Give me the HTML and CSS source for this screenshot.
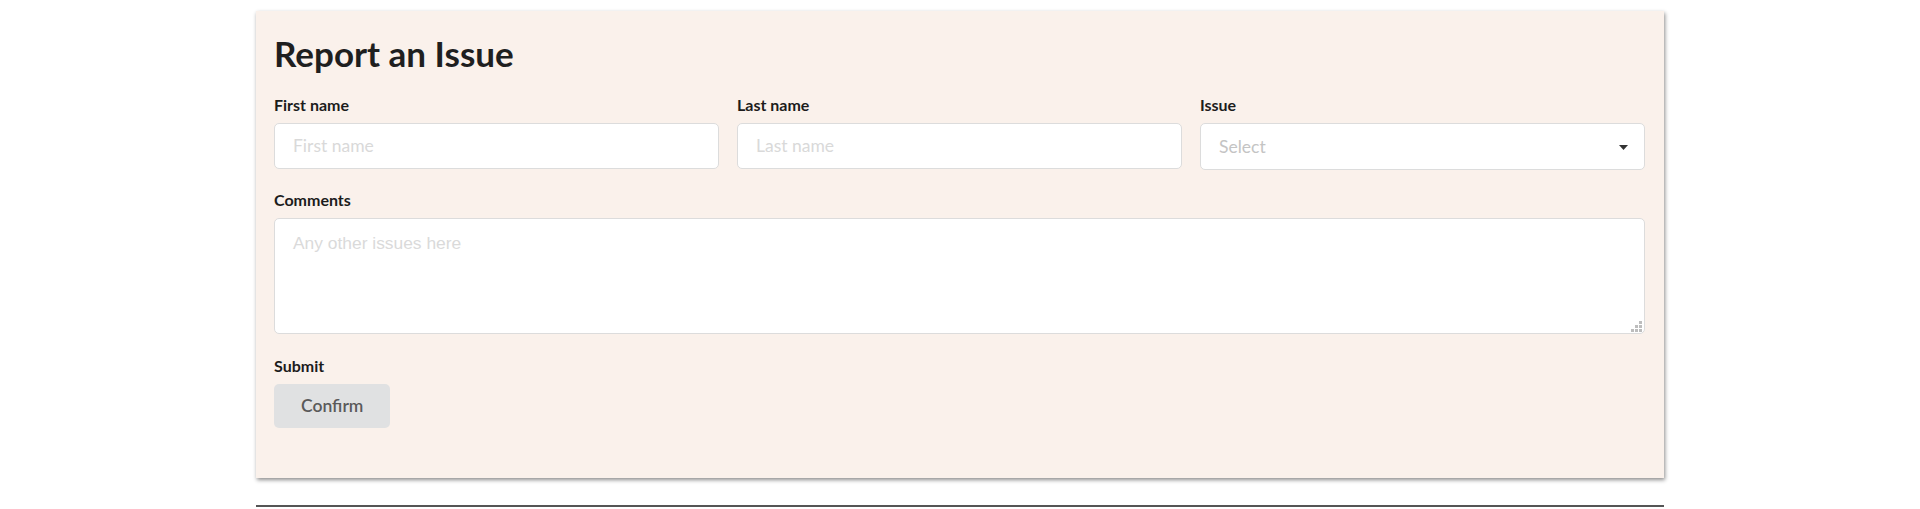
FILE: index.html
```html
<!DOCTYPE html>
<html lang="en">
<head>
<meta charset="utf-8">
<title>Report an Issue</title>
<link rel="stylesheet" href="styles.css">
</head>
<body>
<div class="container">
  <form class="card">
    <h1 class="title">Report an Issue</h1>
    <div class="row three">
      <div class="field">
        <label class="label">First name</label>
        <input class="input" type="text" placeholder="First name">
      </div>
      <div class="field">
        <label class="label">Last name</label>
        <input class="input" type="text" placeholder="Last name">
      </div>
      <div class="field">
        <label class="label">Issue</label>
        <div class="dropdown">
          <span class="dropdown-text">Select</span>
          <svg class="caret" width="9" height="5" viewBox="0 0 9 5"><path d="M0 0H9L4.5 5Z" fill="#333"/></svg>
        </div>
      </div>
    </div>
    <div class="row">
      <div class="field">
        <label class="label">Comments</label>
        <div class="textarea-wrap">
          <textarea class="textarea" placeholder="Any other issues here"></textarea>
          <svg class="grip" width="11" height="11" viewBox="0 0 11 11">
            <rect x="8" y="0" width="3" height="3" fill="#bdbdbd"/>
            <rect x="4" y="4" width="3" height="3" fill="#bdbdbd"/>
            <rect x="8" y="4" width="3" height="3" fill="#bdbdbd"/>
            <rect x="0" y="8" width="3" height="3" fill="#bdbdbd"/>
            <rect x="4" y="8" width="3" height="3" fill="#bdbdbd"/>
            <rect x="8" y="8" width="3" height="3" fill="#bdbdbd"/>
          </svg>
        </div>
      </div>
    </div>
    <div class="row submit-row">
      <div class="field">
        <label class="label">Submit</label>
        <button class="button" type="button">Confirm</button>
      </div>
    </div>
  </form>
  <hr class="rule">
</div>
</body>
</html>
```
FILE: styles.css
```css
html, body {
  margin: 0;
  padding: 0;
  background: #ffffff;
}
body {
  font-family: Lato, "Noto Sans", sans-serif;
  color: #212121;
}
.container {
  width: 1408px;
  margin: 0 auto;
  padding-top: 11px;
}
.card {
  display: block;
  background: #faf1eb;
  padding: 20px 19px 50.5px 18px;
  box-shadow: 1px 2px 4px rgba(0, 0, 0, 0.45);
}
.title {
  margin: 0 0 20.5px 0;
  font-size: 35px;
  line-height: 44px;
  font-weight: 700;
  color: #1f1f1f;
}
.row {
  display: flex;
  flex-direction: column;
}
.row + .row {
  margin-top: 21px;
}
.row.submit-row {
  margin-top: 22.5px;
}
.row.three {
  display: grid;
  grid-template-columns: 1fr 1fr 1fr;
  column-gap: 18px;
  align-items: start;
}
.field {
  display: flex;
  flex-direction: column;
}
.label {
  display: block;
  font-size: 16px;
  line-height: 17px;
  font-weight: 700;
  color: #1c1c1c;
  margin-bottom: 10px;
}
.input {
  box-sizing: border-box;
  height: 46px;
  margin: 0;
  padding: 0 18px;
  border: 1px solid #dcdcdc;
  border-radius: 5px;
  background: #fff;
  font-family: Lato, sans-serif;
  font-size: 17.5px;
  color: #212121;
  outline: none;
}
.input::placeholder {
  color: #d9d9d9;
}
.dropdown {
  box-sizing: border-box;
  height: 47px;
  padding: 0 16px 0 18px;
  border: 1px solid #dcdcdc;
  border-radius: 5px;
  background: #fff;
  display: flex;
  align-items: center;
  justify-content: space-between;
}
.dropdown-text {
  font-size: 17.5px;
  color: #c4c4c4;
}
.caret {
  display: block;
  margin-top: 2px;
}
.textarea-wrap {
  position: relative;
  display: flex;
  flex-direction: column;
}
.textarea {
  box-sizing: border-box;
  height: 116.5px;
  margin: 0;
  padding: 13px 18px;
  border: 1px solid #dcdcdc;
  border-radius: 5px;
  background: #fff;
  font-family: "Liberation Sans", Arial, sans-serif;
  font-size: 17.4px;
  line-height: 22px;
  color: #212121;
  outline: none;
  resize: none;
}
.textarea::placeholder {
  color: #dadada;
}
.grip {
  position: absolute;
  right: 3px;
  bottom: 2px;
  display: block;
}
.button {
  align-self: flex-start;
  box-sizing: border-box;
  height: 44px;
  padding: 0 27px;
  border: none;
  border-radius: 5px;
  background: #e0e1e2;
  font-family: Lato, sans-serif;
  font-size: 17.5px;
  font-weight: 600;
  color: #5a5a5a;
}
.rule {
  margin: 27px 0 0 0;
  height: 0;
  border: none;
  border-top: 2px solid #555555;
}
```
